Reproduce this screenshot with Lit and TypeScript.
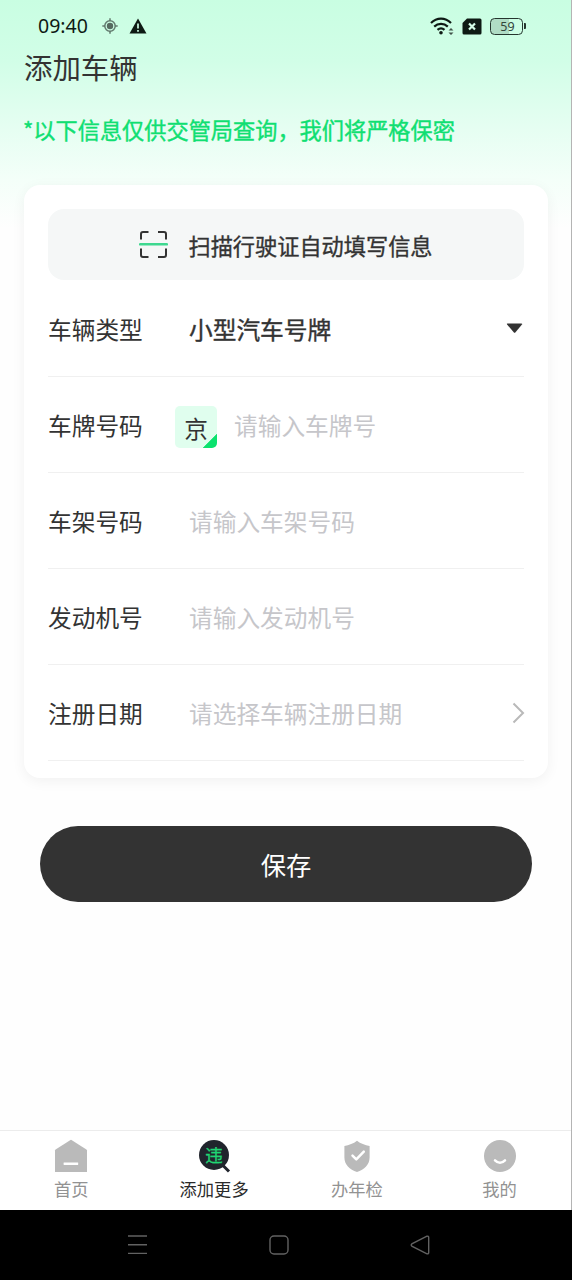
import { LitElement, html, css, svg, nothing } from "lit";
import { customElement, property } from "lit/decorators.js";

interface Field {
  label: string;
  value?: string;
  placeholder?: string;
  region?: string;
  trailing?: "caret" | "chevron";
}

const FIELDS: Field[] = [
  { label: "车辆类型", value: "小型汽车号牌", trailing: "caret" },
  { label: "车牌号码", placeholder: "请输入车牌号", region: "京" },
  { label: "车架号码", placeholder: "请输入车架号码" },
  { label: "发动机号", placeholder: "请输入发动机号" },
  { label: "注册日期", placeholder: "请选择车辆注册日期", trailing: "chevron" },
];

const TAB_ICONS = {
  home: svg`
    <path d="M17.5 1 L32.4 10.4 Q33 10.8 33 11.6 V33 H1 V11.6 Q1 10.8 1.6 10.4 L16.5 1 Q17 .7 17.5 1Z" fill="#bababa"/>
    <rect x="9.6" y="23.4" width="14.6" height="2.6" rx=".4" fill="#fff"/>`,
  add: svg`
    <path d="M25 25.500 L32 32.500" stroke="#20242c" stroke-width="3"/>
    <circle cx="17" cy="16" r="15" fill="#20242c"/>
    <text x="17" y="22.600" text-anchor="middle" font-size="17.500" fill="#1fd573" stroke="#1fd573" stroke-width=".3">违</text>`,
  check: svg`
    <path d="M17 1.800 C20.500 4.600 25 6.200 29.600 7 V18.500 C29.600 25.600 24.400 30.600 17 33 C9.600 30.600 4.400 25.600 4.400 18.500 V7 C9 6.200 13.500 4.600 17 1.800Z" fill="#bababa"/>
    <path d="M12.500 16.600 L16.300 20.400 L23.800 12.600" fill="none" stroke="#fff" stroke-width="2.500" stroke-linecap="round" stroke-linejoin="round"/>`,
  me: svg`
    <circle cx="17" cy="17" r="16" fill="#bababa"/>
    <path d="M12 21.300 Q17 26.300 22 21.300" fill="none" stroke="#fff" stroke-width="2.500" stroke-linecap="round"/>`,
};

const TABS: { label: string; icon: keyof typeof TAB_ICONS; active?: boolean }[] = [
  { label: "首页", icon: "home" },
  { label: "添加更多", icon: "add", active: true },
  { label: "办年检", icon: "check" },
  { label: "我的", icon: "me" },
];

@customElement("status-bar")
class StatusBar extends LitElement {
  static styles = css`
    :host { display: flex; align-items: center; justify-content: space-between; height: 50px; box-sizing: border-box; padding: 2px 45px 0 38px; color: #0e1a14; }
    .time { font-family: "Noto Sans", sans-serif; font-size: 19.500px; line-height: 24px; width: 53px; }
    .left { display: flex; align-items: center; gap: 11px; }
    .right { display: flex; align-items: center; gap: 8px; }
    svg { display: block; }
    .battery { display: flex; align-items: center; gap: 1px; }
    .cell { width: 33px; height: 17px; box-sizing: border-box; border: 1.500px solid #25362e; border-radius: 4.500px; display: flex; align-items: center; justify-content: center; font: 12.500px/15px "Noto Sans", sans-serif; color: #33443b; padding-left: 2px; background: linear-gradient(90deg, #b0dcc5 59%, transparent 59%); }
    .nub { width: 2px; height: 6px; background: #25362e; border-radius: 0 1px 1px 0; }
  `;
  render() {
    return html`
      <div class="left">
        <span class="time">09:40</span>
        <svg width="16" height="16" viewBox="0 0 16 16"><g fill="none" stroke="#627a6e" stroke-width="1.500"><circle cx="8" cy="8" r="5.200"/><path d="M8 .3V3M8 13v2.700M.3 8H3M13 8h2.700"/></g><circle cx="8" cy="8" r="3.200" fill="#566a60"/></svg>
        <svg width="18" height="16" viewBox="0 0 18 16"><path d="M9 .5 L17.500 15.500 H.5Z" fill="#0e1a14"/><path d="M9 5.500v5M9 12v1.800" stroke="#cdfce3" stroke-width="1.700"/></svg>
      </div>
      <div class="right">
        <svg width="24" height="19" viewBox="0 0 24 19">
          <g fill="none" stroke="#0e1a14" stroke-width="2.200"><path d="M1 6 C6.800 .2 15.200 .2 21 6"/><path d="M4.200 9.600 C8.100 5.900 13.900 5.900 17.800 9.600"/><path d="M7.500 12.900 C9.600 11 12.400 11 14.500 12.900"/></g>
          <circle cx="11" cy="15.800" r="1.800" fill="#0e1a14"/>
          <path d="M18.500 13.600 L21 11 L23.500 13.600Z M18.500 15.400 L21 18 L23.500 15.400Z" fill="#405249"/>
        </svg>
        <svg width="20" height="17" viewBox="0 0 20 17"><path d="M5 .5 H18 Q19.500 .5 19.500 2 V15 Q19.500 16.500 18 16.500 H2 Q.5 16.500 .5 15 V5Z" fill="#0e1a14"/><path d="M7 5.500 L13 11.500 M13 5.500 L7 11.500" stroke="#d4fce6" stroke-width="2.200"/></svg>
        <div class="battery"><div class="cell">59</div><div class="nub"></div></div>
      </div>`;
  }
}

@customElement("form-row")
class FormRow extends LitElement {
  @property({ attribute: false }) field!: Field;
  static styles = css`
    :host { display: flex; align-items: center; height: 96px; box-sizing: border-box; border-bottom: 1px solid #f0f0f0; font-size: 23.700px; line-height: 34px; color: #333; }
    .label { width: 141px; flex: none; }
    .body { flex: 1; display: flex; align-items: center; white-space: nowrap; }
    .value { -webkit-text-stroke: .4px #333; }
    .hint { color: #c6c6ca; }
    .region { width: 42px; height: 42px; margin: 5px 17px 0 -14px; box-sizing: border-box; padding-top: 5px; border-radius: 5px; overflow: hidden; text-align: center; background: linear-gradient(135deg, transparent 82.500%, #0be26e 83.500%), #e0feee; }
    svg { display: block; }
    .chevron { margin-right: -1px; }
  `;
  render() {
    const f = this.field;
    return html`
      <div class="label">${f.label}</div>
      <div class="body">
        ${f.region ? html`<div class="region">${f.region}</div>` : nothing}
        <span class=${f.value ? "value" : "hint"}>${f.value ?? f.placeholder}</span>
      </div>
      ${f.trailing === "caret"
        ? html`<svg width="18" height="12" viewBox="0 0 18 12"><path d="M1.500 .5 H15.500 Q16.800 .5 16 1.500 L9.500 9.300 Q8.600 10.300 7.700 9.300 L1.100 1.500 Q.4 .5 1.500 .5Z" fill="#333"/></svg>`
        : nothing}
      ${f.trailing === "chevron"
        ? html`<svg class="chevron" width="14" height="22" viewBox="0 0 14 22"><path d="M2.500 1.500 L12 11 L2.500 20.500" fill="none" stroke="#b9b9b9" stroke-width="2"/></svg>`
        : nothing}`;
  }
}

@customElement("tab-bar")
class TabBar extends LitElement {
  static styles = css`
    :host { display: grid; grid-template-columns: repeat(4, 1fr); height: 80px; box-sizing: border-box; border-top: 1px solid #ececec; background: #fff; }
    .tab { display: flex; flex-direction: column; align-items: center; padding-top: 8px; color: #929292; font-size: 17.300px; line-height: 26px; gap: 3px; }
    .active { color: #2b2b2b; }
    svg { display: block; }
  `;
  render() {
    return TABS.map(
      (t) => html`<div class="tab ${t.active ? "active" : ""}">
        <svg width="34" height="34" viewBox="0 0 34 34">${TAB_ICONS[t.icon]}</svg>
        <span>${t.label}</span>
      </div>`,
    );
  }
}

@customElement("app-root")
class AppRoot extends LitElement {
  static styles = css`
    :host { display: flex; flex-direction: column; height: 1280px; width: 100%; overflow: hidden; background: #000; font-family: "Noto Sans CJK SC", sans-serif; }
    .screen { flex: 1; display: flex; flex-direction: column; box-sizing: border-box; border-right: 1px solid #b4b4b4; background: linear-gradient(180deg, #c9fee2 0, #d1fee7 60px, #e6fef2 130px, #f4fff9 180px, #fefefe 228px); }
    .title { margin: -1px 0 0; padding: 0 24px; font-weight: 400; font-size: 28.400px; line-height: 36px; color: #333; }
    .notice { margin: 31px 0 0; padding: 0 23px; font-size: 22.200px; line-height: 26px; color: #10df72; -webkit-text-stroke: .4px #10df72; white-space: nowrap; }
    .card { margin: 43px 23px 0 24px; height: 593px; box-sizing: border-box; padding: 24px; border-radius: 16px; background: #fff; box-shadow: 0 3px 14px rgba(0, 0, 0, .055); }
    .scan { display: flex; align-items: center; justify-content: center; gap: 20px; height: 71px; margin-bottom: 1px; border-radius: 16px; background: #f5f7f7; color: #333; font-size: 22.200px; line-height: 32px; -webkit-text-stroke: .35px #333; }
    .scan svg { display: block; margin-bottom: 2px; }
    .save { display: flex; align-items: center; justify-content: center; height: 76px; margin: 48px 39px 0 40px; border-radius: 38px; background: #333; color: #fff; font-size: 25.300px; }
    .spacer { flex: 1; }
    .nav { flex: none; height: 70px; display: flex; align-items: center; padding: 0 142px 0 127px; justify-content: space-between; }
    .nav svg { display: block; }
  `;
  render() {
    return html`
      <div class="screen">
        <status-bar></status-bar>
        <h1 class="title">添加车辆</h1>
        <p class="notice">*以下信息仅供交管局查询，我们将严格保密</p>
        <section class="card">
          <div class="scan">
            <svg width="29" height="30" viewBox="0 0 29 30">
              <g fill="none" stroke="#333" stroke-width="2"><path d="M2 10.500V5Q2 3 4 3H9.500M19 3H25Q27 3 27 5V10.500M2 19.500V26Q2 28 4 28H9.500M19 28H25Q27 28 27 26V19.500"/></g>
              <path d="M1.200 15.300H27.800" stroke="#3ed890" stroke-width="2.600" stroke-linecap="round"/>
            </svg>
            <span>扫描行驶证自动填写信息</span>
          </div>
          ${FIELDS.map((f) => html`<form-row .field=${f}></form-row>`)}
        </section>
        <div class="save">保存</div>
        <div class="spacer"></div>
        <tab-bar></tab-bar>
      </div>
      <div class="nav">
        <svg width="21" height="22" viewBox="0 0 21 22"><path d="M1 2H20M1 10.700H20M1 19.400H20" stroke="#626262" stroke-width="1.400"/></svg>
        <svg width="20" height="20" viewBox="0 0 20 20"><rect x="1" y="1" width="18" height="18" rx="4" fill="none" stroke="#626262" stroke-width="1.400"/></svg>
        <svg width="20" height="20" viewBox="0 0 20 20"><path d="M17 1.200 L1.800 8.900 Q.6 10 1.800 11.100 L17 18.800 Q18.700 19.200 18.700 17.500 V2.500 Q18.700 .8 17 1.200Z" fill="none" stroke="#626262" stroke-width="1.400"/></svg>
      </div>`;
  }
}
